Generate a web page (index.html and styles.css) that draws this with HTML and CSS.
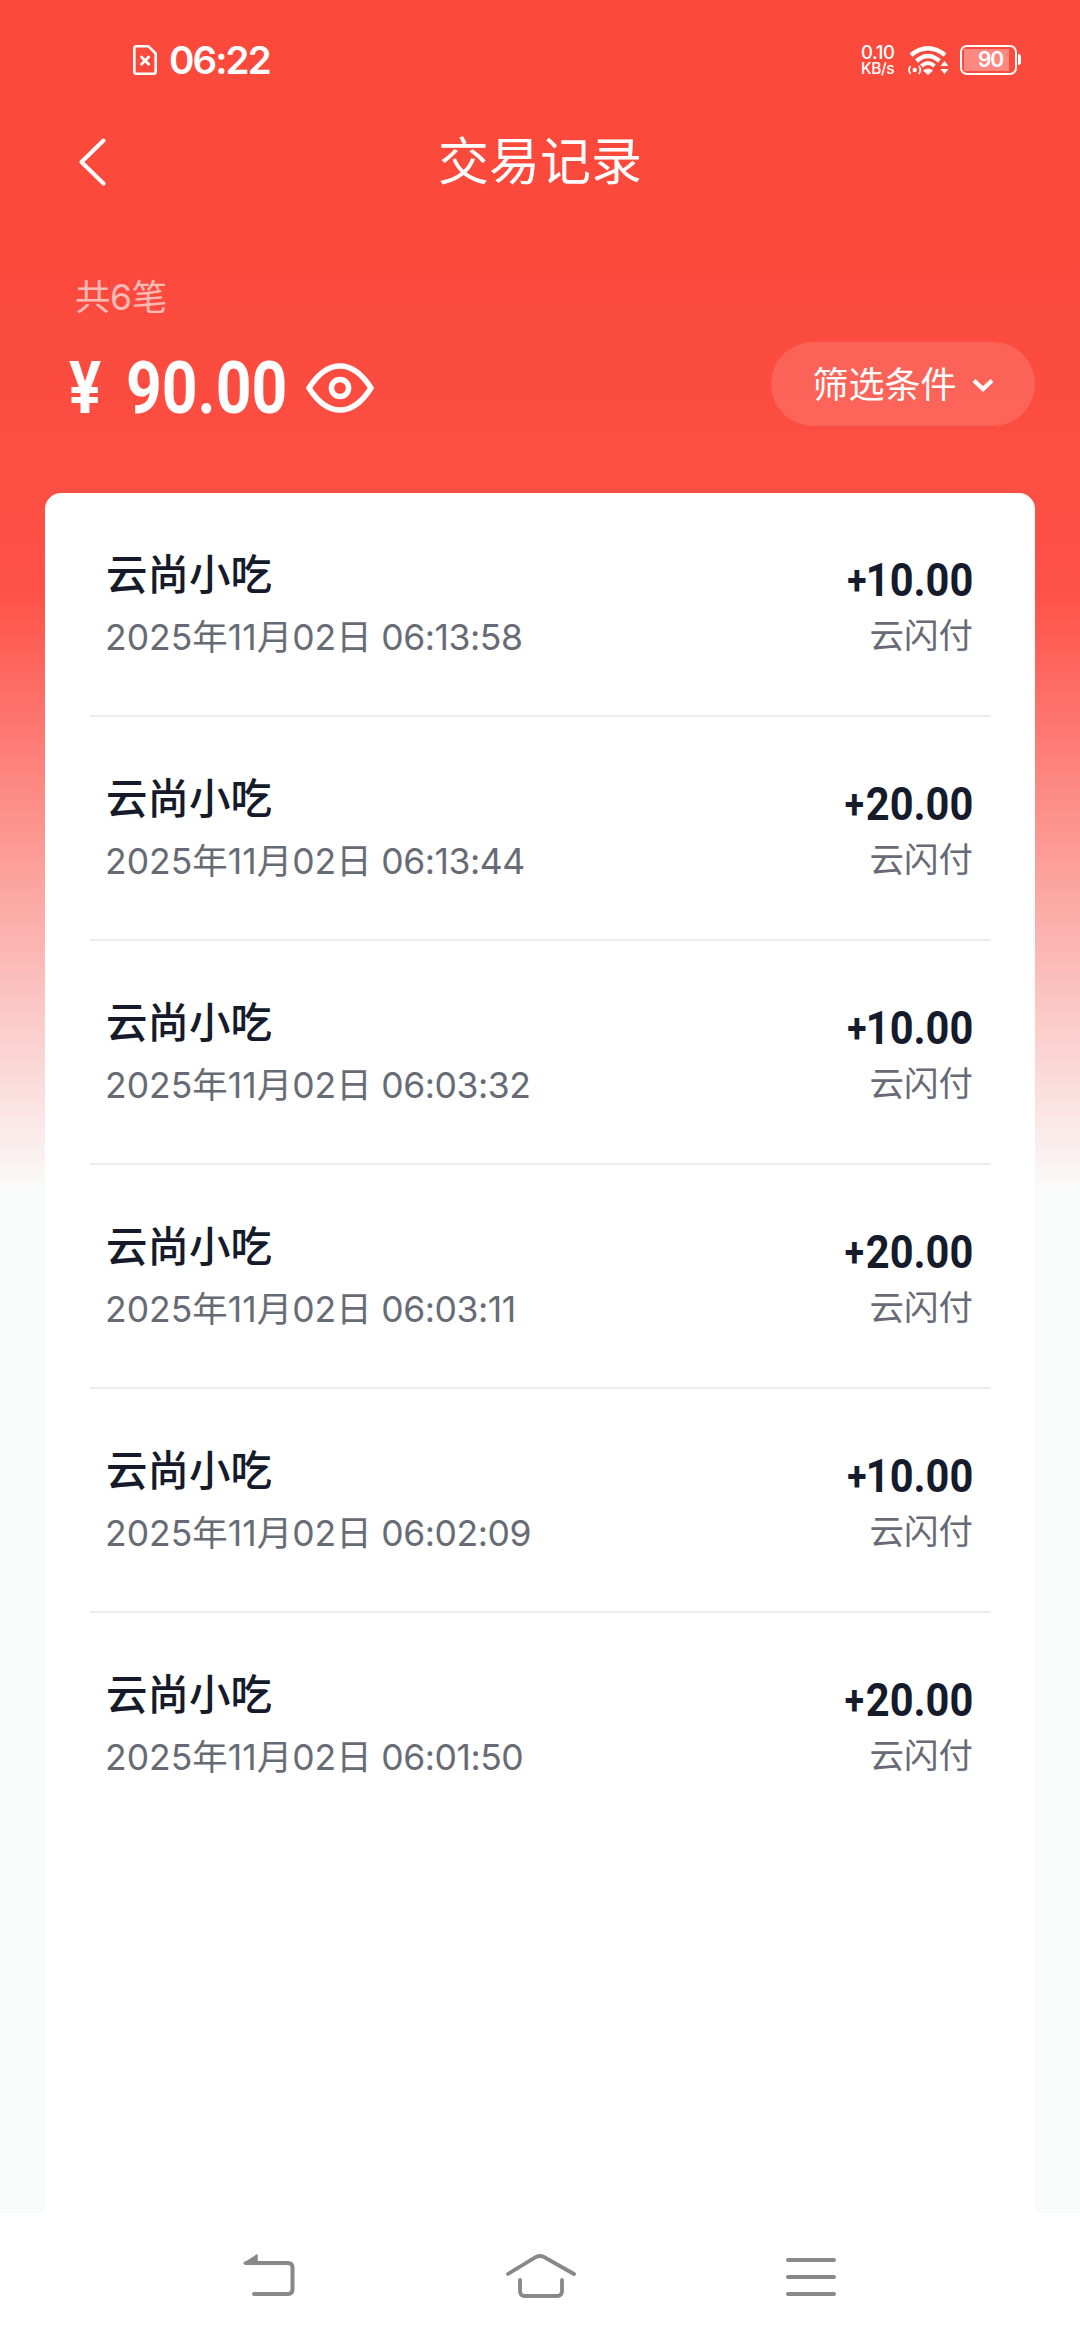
FILE: index.html
```html
<!DOCTYPE html>
<html lang="zh-CN">
<head>
    <meta charset="UTF-8">
    <meta name="viewport" content="width=device-width, initial-scale=1.0">
    <title>交易记录</title>
    <link rel="stylesheet" href="styles.css">
</head>
<body>
    <div class="screen">
        <div class="status-bar">
            <div class="status-left">
                <svg class="sim" width="24" height="30" viewBox="0 0 24 30" fill="none" stroke="#fff" stroke-linecap="round" stroke-linejoin="round">
                    <path stroke-width="2.6" d="M3.5 1.3H15.5L22.7 8.5V26.5Q22.7 28.7 20.5 28.7H3.5Q1.3 28.7 1.3 26.5V3.5Q1.3 1.3 3.5 1.3Z"/>
                    <path stroke-width="2.8" d="M8.5 12L15.7 19.2M15.7 12L8.5 19.2"/>
                </svg>
                <span class="clock">06:22</span>
            </div>
            <div class="status-right">
                <div class="speed">
                    <span class="speed-num">0.10</span>
                    <span class="speed-unit">KB/s</span>
                </div>
                <svg class="wifi" width="41" height="30" viewBox="0 0 41 30" fill="none" stroke="#fff">
                    <path stroke-width="4.4" d="M3 10Q20 -3.500 37 10"/>
                    <path stroke-width="4.4" d="M8.500 16Q20 6 31.500 16"/>
                    <path stroke-width="4" d="M13.500 21Q20 15 26.500 21"/>
                    <path stroke="none" fill="#fff" d="M15 25.500Q20 21.500 25 25.500L20 30Z"/>
                    <circle cx="6.700" cy="25" r="2.200" stroke="none" fill="#fff"/>
                    <path stroke-width="1.700" d="M2.600 21Q-.6 25 2.600 29M10.800 21Q14 25 10.800 29"/>
                    <path stroke="none" fill="#fff" d="M32.500 21L36.500 16L40.500 21ZM32.500 24L36.500 29L40.500 24Z"/>
                </svg>
                <div class="battery"><span class="battery-level">90</span></div>
            </div>
        </div>

        <div class="title-bar">
            <svg class="back" width="27" height="48" viewBox="0 0 27 48" fill="none" stroke="#fff" stroke-width="4" stroke-linecap="round" stroke-linejoin="round">
                <path d="M24.500 2.500L2.500 24L24.500 45.500"/>
            </svg>
            <h1 class="title">交易记录</h1>
        </div>

        <div class="summary">
            <div class="count">共6笔</div>
            <div class="summary-row">
                <div class="total">
                    <span class="yen">¥</span>
                    <span class="total-num">90.00</span>
                    <svg class="eye" width="68" height="52" viewBox="0 0 68 52" fill="none" stroke="#fff" stroke-width="5.500" stroke-linejoin="round">
                        <path d="M3 26Q17 4 34 4T65 26Q51 48 34 48T3 26Z"/>
                        <circle cx="34" cy="26" r="8.600"/>
                    </svg>
                </div>
                <div class="filter">
                    <span>筛选条件</span>
                    <svg width="22" height="14" viewBox="0 0 22 14" fill="none" stroke="#fff" stroke-width="4.200">
                        <path d="M2 2.500L11 11L20 2.500"/>
                    </svg>
                </div>
            </div>
        </div>

        <div class="list">
            <div class="item">
                <div class="left">
                    <div class="name">云尚小吃</div>
                    <div class="time"><span class="day">2025年11月02日</span> 06:13:58</div>
                </div>
                <div class="right">
                    <div class="amount"><span class="plus tight">+</span>10.00</div>
                    <div class="channel">云闪付</div>
                </div>
            </div>
            <div class="item">
                <div class="left">
                    <div class="name">云尚小吃</div>
                    <div class="time"><span class="day">2025年11月02日</span> 06:13:44</div>
                </div>
                <div class="right">
                    <div class="amount"><span class="plus">+</span>20.00</div>
                    <div class="channel">云闪付</div>
                </div>
            </div>
            <div class="item">
                <div class="left">
                    <div class="name">云尚小吃</div>
                    <div class="time"><span class="day">2025年11月02日</span> 06:03:32</div>
                </div>
                <div class="right">
                    <div class="amount"><span class="plus tight">+</span>10.00</div>
                    <div class="channel">云闪付</div>
                </div>
            </div>
            <div class="item">
                <div class="left">
                    <div class="name">云尚小吃</div>
                    <div class="time"><span class="day">2025年11月02日</span> 06:03:11</div>
                </div>
                <div class="right">
                    <div class="amount"><span class="plus">+</span>20.00</div>
                    <div class="channel">云闪付</div>
                </div>
            </div>
            <div class="item">
                <div class="left">
                    <div class="name">云尚小吃</div>
                    <div class="time"><span class="day">2025年11月02日</span> 06:02:09</div>
                </div>
                <div class="right">
                    <div class="amount"><span class="plus tight">+</span>10.00</div>
                    <div class="channel">云闪付</div>
                </div>
            </div>
            <div class="item">
                <div class="left">
                    <div class="name">云尚小吃</div>
                    <div class="time"><span class="day">2025年11月02日</span> 06:01:50</div>
                </div>
                <div class="right">
                    <div class="amount"><span class="plus">+</span>20.00</div>
                    <div class="channel">云闪付</div>
                </div>
            </div>
        </div>

        <div class="nav-bar">
            <svg width="72" height="48" viewBox="0 0 72 48" fill="none" stroke="#888" stroke-width="4" stroke-linecap="round">
                <path d="M12 11H54Q58.500 11 58.500 16V37Q58.500 42 54 42H20"/>
                <path d="M10 11.500L23 3V12Z" fill="#888" stroke-width="1.500" stroke-linejoin="round"/>
            </svg>
            <svg width="72" height="48" viewBox="0 0 72 48" fill="none" stroke="#888" stroke-width="3.800" stroke-linecap="round">
                <path d="M4 22L32 5Q36 3 40 5L70 22"/>
                <path d="M16 28V39Q16 44 21 44H53Q58 44 58 39V28"/>
            </svg>
            <svg width="72" height="48" viewBox="0 0 72 48" fill="none" stroke="#888" stroke-width="4" stroke-linecap="round">
                <path d="M14 8H60M14 25H60M14 42H60"/>
            </svg>
        </div>
    </div>
</body>
</html>
```
FILE: styles.css
```css
* {
    box-sizing: border-box;
}

body {
    margin: 0;
    font-family: Inter, "Noto Sans CJK SC", sans-serif;
}

.screen {
    display: flex;
    flex-direction: column;
    width: 1080px;
    height: 2340px;
    overflow: hidden;
    background: linear-gradient(#fb493c 0, #fb493c 240px, #fe5147 590px, #fafbfb 1190px, #fafbfb 100%);
}

/* Status bar */
.status-bar {
    display: flex;
    justify-content: space-between;
    align-items: center;
    height: 120px;
    padding: 0 59px 0 133px;
    color: #fff;
}

.status-left,
.status-right {
    display: flex;
    align-items: center;
}

.clock {
    margin-left: 12px;
    font-size: 38.5px;
    font-weight: 600;
    letter-spacing: -1.9px;
    line-height: 40px;
}

.speed {
    display: flex;
    flex-direction: column;
    width: 36px;
    margin-right: 11px;
    font-weight: 500;
    letter-spacing: -0.4px;
    white-space: nowrap;
}

.speed-num {
    font-size: 18.5px;
    line-height: 17px;
}

.speed-unit {
    font-size: 15.5px;
    line-height: 16px;
}

.wifi {
    margin-right: 11px;
}

.battery {
    position: relative;
    display: flex;
    width: 57px;
    height: 30px;
    margin-right: 4px;
    padding: 2px;
    border: 2.6px solid #fff;
    border-radius: 7px;
}

.battery::after {
    content: "";
    position: absolute;
    right: -6px;
    top: 7px;
    width: 3px;
    height: 11px;
    border-radius: 0 3px 3px 0;
    background-color: #fff;
}

.battery-level {
    width: 45px;
    padding-left: 8px;
    text-align: center;
    background-color: rgba(255, 255, 255, 0.35);
    font-size: 21px;
    font-weight: 600;
    line-height: 22px;
    letter-spacing: -1.2px;
}

/* Title */
.title-bar {
    display: grid;
    grid-template-columns: 1fr auto 1fr;
    align-items: center;
    height: 84px;
    padding: 0 79px;
    color: #fff;
}

.title {
    margin: 0;
    font-size: 51px;
    font-weight: 400;
    line-height: 84px;
}

/* Summary */
.summary {
    height: 289px;
    padding: 69px 45px 0 69px;
    color: #fff;
}

.count {
    padding-left: 6px;
    font-size: 35.5px;
    font-weight: 400;
    line-height: 50px;
    letter-spacing: -0.4px;
    opacity: 0.62;
}

.summary-row {
    display: flex;
    justify-content: space-between;
    align-items: center;
    height: 84px;
    margin-top: 19px;
}

.total {
    display: flex;
    align-items: center;
    height: 84px;
    padding-top: 8px;
    font-family: Roboto, sans-serif;
    font-weight: 700;
}

.yen {
    width: 57px;
    font-size: 73px;
    line-height: 84px;
    transform: scaleX(0.82);
    transform-origin: left;
}

.total-num {
    width: 180px;
    font-size: 73px;
    line-height: 84px;
    transform: scaleX(0.855);
    transform-origin: left;
}

.filter {
    display: flex;
    align-items: center;
    justify-content: center;
    gap: 15px;
    width: 264px;
    height: 84px;
    padding-top: 2px;
    border-radius: 42px;
    background-color: rgba(255, 255, 255, 0.13);
    font-size: 36px;
    line-height: 84px;
}

/* Transaction list */
.list {
    flex: 1;
    margin: 0 45px;
    padding: 0 44px 0 45px;
    border-radius: 16px 16px 0 0;
    background-color: #fff;
}

.item {
    display: flex;
    justify-content: space-between;
    height: 224px;
    padding: 52px 18px 0 16px;
    border-bottom: 2px solid #ececec;
}

.item:last-child {
    border-bottom: none;
}

.name {
    color: #151b2a;
    font-size: 41.5px;
    font-weight: 500;
    line-height: 60px;
}

.time {
    margin: 6px 0 0 -1px;
    color: #676b75;
    font-size: 35.5px;
    font-kerning: none;
    line-height: 54px;
    letter-spacing: -0.45px;
}

.day {
    letter-spacing: 0;
}

.right {
    text-align: right;
}

.amount {
    color: #151b2a;
    font-family: Roboto, sans-serif;
    font-size: 47px;
    font-weight: 700;
    line-height: 70px;
    transform: scaleX(0.885);
    transform-origin: right;
}

.plus {
    display: inline-block;
    margin-right: 2px;
    font-size: 40px;
    line-height: 40px;
    vertical-align: 2px;
}

.plus.tight {
    margin-right: -1px;
}

.channel {
    margin-top: -6px;
    color: #676b75;
    font-size: 34.5px;
    line-height: 54px;
}

/* System navigation */
.nav-bar {
    display: flex;
    justify-content: center;
    gap: 198px;
    height: 127px;
    padding-top: 39px;
    background-color: #fff;
}
```
